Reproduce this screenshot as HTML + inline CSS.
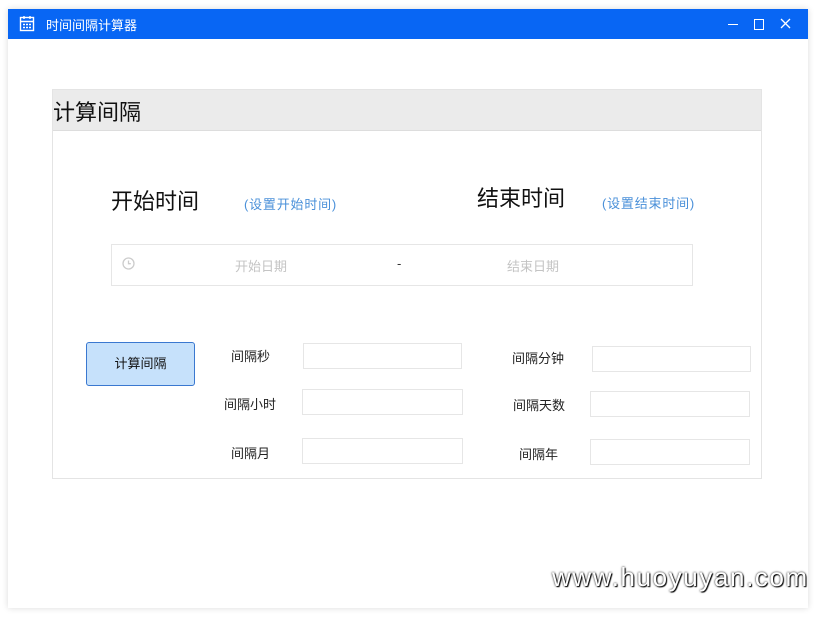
<html><head><style>
body{margin:0;width:820px;height:617px;background:#fff;position:relative;overflow:hidden;font-family:"Liberation Sans","Noto Sans CJK SC",sans-serif}
.a{position:absolute}
.win{left:8px;top:9px;width:800px;height:599px;background:#fff;box-shadow:0 0 6px rgba(0,0,0,.15)}
.tb{left:8px;top:9px;width:800px;height:30px;background:#0866f4;color:#fff;font-size:13px}
.inp{position:absolute;border:1px solid #e6e6e6;height:24px;background:#fff}
.lb{position:absolute;font-size:13px;color:#222}
</style></head><body>
<div class="a win"></div>
<div class="a tb">
<svg class="a" style="left:11px;top:6px" width="16" height="17" viewBox="0 0 16 17" fill="none" stroke="#fff" stroke-width="1.4"><rect x="1.5" y="2.5" width="13" height="13"/><path d="M1.5 6.5h13M5 1v3M11 1v3M4 9.5h2M7 9.5h2M10 9.5h2M4 12.5h2M7 12.5h2M10 12.5h2"/></svg>
<div class="a" style="left:38px;top:6px">时间间隔计算器</div>
<div class="a" style="left:720px;top:15px;width:10px;height:1px;background:#fff"></div>
<div class="a" style="left:746px;top:10px;width:8px;height:9px;border:1px solid #fff"></div>
<svg class="a" style="left:772px;top:9px" width="11" height="11" viewBox="0 0 11 11" stroke="#fff" stroke-width="1.3"><path d="M1 1l9 9M10 1l-9 9"/></svg>
</div>
<div class="a" style="left:52px;top:89px;width:708px;height:388px;border:1px solid #e4e4e4"></div>
<div class="a" style="left:53px;top:90px;width:708px;height:40px;background:#ebebeb;border-bottom:1px solid #ddd"></div>
<div class="a" style="left:53px;top:95px;font-size:22px;color:#111">计算间隔</div>
<div class="a" style="left:111px;top:184px;font-size:22px;color:#111">开始时间</div>
<div class="a" style="left:244px;top:194px;font-size:13px;color:#4a90d9;letter-spacing:0.8px">(设置开始时间)</div>
<div class="a" style="left:477px;top:181px;font-size:22px;color:#111">结束时间</div>
<div class="a" style="left:602px;top:193px;font-size:13px;color:#4a90d9;letter-spacing:0.8px">(设置结束时间)</div>
<div class="a" style="left:111px;top:244px;width:580px;height:40px;border:1px solid #e6e6e6"></div>
<svg class="a" style="left:122px;top:257px" width="13" height="13" viewBox="0 0 13 13" fill="none" stroke="#ccc" stroke-width="1.3"><circle cx="6.5" cy="6.5" r="5.5"/><path d="M6.5 3.5v3.2h2.3"/></svg>
<div class="a" style="left:235px;top:256px;font-size:13px;color:#c4c4c4">开始日期</div>
<div class="a" style="left:397px;top:256px;font-size:13px;color:#333">-</div>
<div class="a" style="left:507px;top:256px;font-size:13px;color:#c4c4c4">结束日期</div>
<div class="a" style="left:86px;top:342px;width:107px;height:42px;background:#c6e1fb;border:1px solid #3a78d0;border-radius:3px;font-size:13px;line-height:42px;text-align:center;color:#111">计算间隔</div>
<div class="lb" style="left:231px;top:346px">间隔秒</div>
<div class="inp" style="left:303px;top:343px;width:157px"></div>
<div class="lb" style="left:224px;top:394px">间隔小时</div>
<div class="inp" style="left:302px;top:389px;width:159px"></div>
<div class="lb" style="left:231px;top:443px">间隔月</div>
<div class="inp" style="left:302px;top:438px;width:159px"></div>
<div class="lb" style="left:512px;top:348px">间隔分钟</div>
<div class="inp" style="left:592px;top:346px;width:157px"></div>
<div class="lb" style="left:513px;top:395px">间隔天数</div>
<div class="inp" style="left:590px;top:391px;width:158px"></div>
<div class="lb" style="left:519px;top:444px">间隔年</div>
<div class="inp" style="left:590px;top:439px;width:158px"></div>
<div class="a" style="left:552px;top:562px;font-size:26px;color:#fff;letter-spacing:1.6px;text-shadow:0 0 2px #000,1px 1px 1px #000">www.huoyuyan.com</div>
</body></html>
